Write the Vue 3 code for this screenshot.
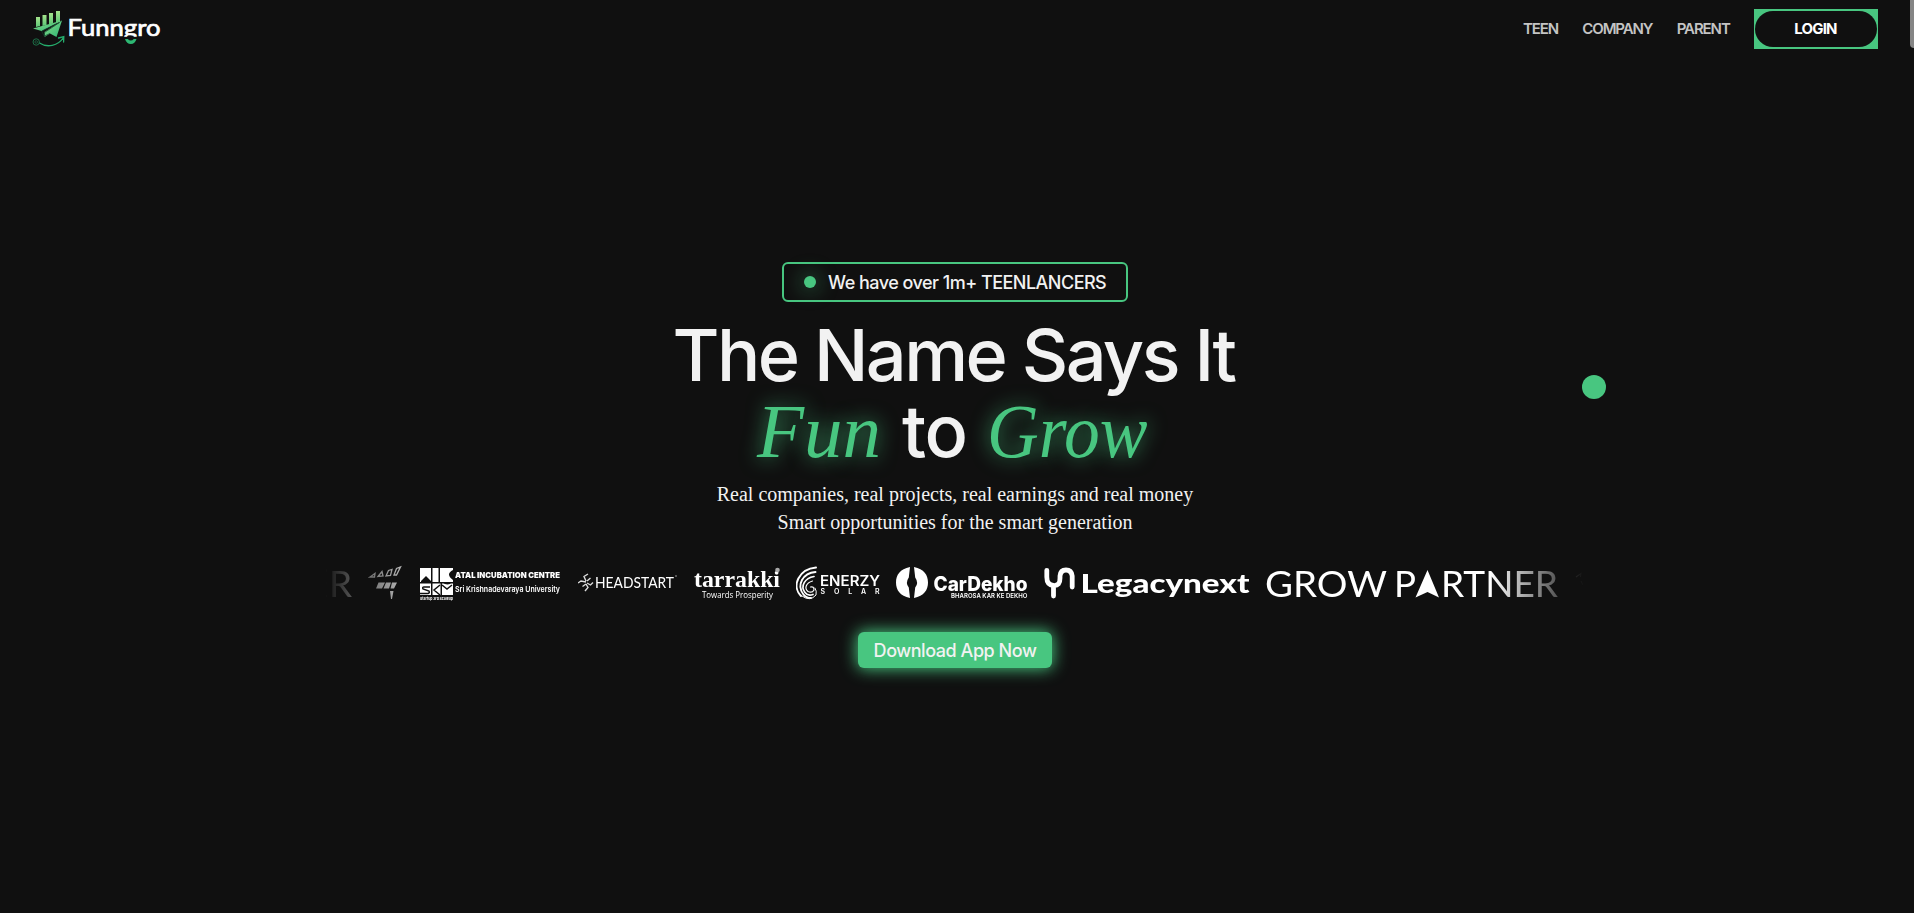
<script setup>
const links = ['TEEN', 'COMPANY', 'PARENT']
</script>

<template>
  <div class="page">
    <header class="bar">
      <svg class="brand" width="132" height="40" viewBox="0 0 132 40">
        <defs>
          <linearGradient id="leaf" x1="0" y1="0" x2="0" y2="1">
            <stop offset="0" stop-color="#a5e38c" />
            <stop offset="1" stop-color="#5cc776" />
          </linearGradient>
          <linearGradient id="plane" x1="0" y1="0" x2="1" y2="1">
            <stop offset="0" stop-color="#93dd8a" />
            <stop offset="1" stop-color="#27b573" />
          </linearGradient>
          <clipPath id="wordclip"><rect x="34" y="0" width="98" height="26.8" /></clipPath>
        </defs>
        <g fill="url(#leaf)">
          <path d="M4 7h4v9l-4 1z" />
          <path d="M10.500 5h4v10l-4 1z" />
          <path d="M17 3h4v10.500l-4 1z" />
          <path d="M24 1h4v11l-4 1z" />
        </g>
        <path d="M1 18.500L30 10.500L9.500 21z" fill="url(#plane)" />
        <path d="M30 10.500L24.500 27L18 23.500L12.500 27L12.500 22z" fill="url(#plane)" />
        <path d="M10 21L27.500 12.500L12.500 22.500V26.500L9.500 21M12.500 26L18 23.500" fill="none" stroke="#14432c" stroke-width=".7" />
        <path d="M7.500 33C15 38 26 36 31.500 27.500M26.500 28L31.800 26.500L31.600 32" fill="none" stroke="#25ad6c" stroke-width="1.300" stroke-linecap="round" />
        <circle cx="4.200" cy="32" r="3.200" fill="none" stroke="#1d6f47" stroke-width="1" />
        <circle cx="4.200" cy="32" r="1.300" fill="none" stroke="#1d6f47" stroke-width=".7" />
        <text class="word" x="35.500" y="26" textLength="93" lengthAdjust="spacingAndGlyphs" clip-path="url(#wordclip)">Funngro</text>
        <path d="M93 29h2.800q3 3 6 0h2.700q-1.500 5-5.700 5t-5.800-5z" fill="#2db873" />
      </svg>
      <nav class="nav">
        <a v-for="l in links" :key="l" class="link">{{ l }}</a>
        <div class="login-box"><button class="login">LOGIN</button></div>
      </nav>
    </header>

    <main class="hero">
      <div class="badge"><i class="pulse"></i><span>We have over 1m+ TEENLANCERS</span></div>
      <h1 class="title">
        <span class="row first">The Name Says It</span>
        <span class="row second"><em class="fun">Fun</em><span class="to">to</span><em class="grow">Grow</em></span>
      </h1>
      <p class="lead">Real companies, real projects, real earnings and real money<br />Smart opportunities for the smart generation</p>

      <div class="marquee">
        <svg width="27" height="36" viewBox="0 0 27 36">
          <text class="gp" x="4" y="32" textLength="23" lengthAdjust="spacingAndGlyphs">R</text>
          <path d="M0 5.500h2M0 18h1.500M0 31h2" stroke="#fff" stroke-width="2.500" />
        </svg>
        <svg width="34" height="36" viewBox="0 0 34 36">
          <g fill="none" stroke="#ddd" stroke-width="1.300">
            <path d="M2 12L7 8.500L6.500 12zM10 11.500L14 6.500L15 11zM18 11L20.500 5.500L24 4.500L22.500 10.500zM26 10L28.500 3.500L32.500 2L28.500 10z" />
          </g>
          <path d="M10.500 17.500h6.500l-3 6H8zM18 17.500h5l-2 6h-5.500zM24 17.500h5l-3 6h-3.500zM22 26h3.500l-1.500 8h-1z" fill="#ddd" />
        </svg>
        <svg width="144" height="36" viewBox="0 0 144 36">
          <path fill="#fff" d="M2 3h11v14H2zM14.500 3h6v14h-6zM22 3h13v14H22zM2 18.500h11V30H2zM14.500 18.500h8V30h-8zM24 18.500h11V30H24z" />
          <path d="M12 22H6q-2 0-1 2l6 2q1 2-1 2.500H2M22 20l-6 5 6 5M24 20l5 4 5-4" fill="none" stroke="#101010" stroke-width="1.500" />
          <path fill="#101010" d="M3 16l5-5 5 5v1H3zM35 5q-8 4 0 10zM24 17q6 5 10 0z" />
          <text class="tiny" x="2" y="34.500" textLength="33" lengthAdjust="spacingAndGlyphs">Startup 3rd Scaleup</text>
          <text class="aic" x="37" y="12.700" textLength="105" lengthAdjust="spacingAndGlyphs">ATAL INCUBATION CENTRE</text>
          <text class="uni" x="37" y="26.500" textLength="105" lengthAdjust="spacingAndGlyphs">Sri Krishnadevaraya University</text>
        </svg>
        <svg width="100" height="36" viewBox="0 0 100 36">
          <path d="M8 16L6 11.500L10 9M8 17L3 16L0 18M8 19L10 22.500L7 26M9 18L12.500 20L15 17.500M8 19L4.500 21.500M9 16L12.500 13" fill="none" stroke="#ddd" stroke-width="1.400" />
          <text class="head" x="17" y="22.500" textLength="79" lengthAdjust="spacingAndGlyphs">HEADSTART</text>
          <circle cx="98" cy="11" r=".8" fill="#aaa" />
        </svg>
        <svg width="86" height="36" viewBox="0 0 86 36">
          <text class="tar" x="0" y="22" textLength="86" lengthAdjust="spacingAndGlyphs">tarrakki</text>
          <circle cx="83.500" cy="5" r="2.300" fill="#aaa" />
          <text class="prosp" x="8" y="33" textLength="71" lengthAdjust="spacingAndGlyphs">Towards Prosperity</text>
        </svg>
        <svg width="84" height="36" viewBox="0 0 84 36">
          <g fill="none" stroke="#fff" stroke-linecap="round">
            <path d="M20 2.500C3 4 -5 21 5 31" stroke-width="2" />
            <path d="M19.500 7C7 8 0 20 7.500 29.500Q10 33 15 33" stroke-width="1.900" />
            <path d="M18 11.500C9 13 4 21 9 27.500Q12 31.500 17 29.500" stroke-width="1.700" />
            <path d="M16.500 16C10 18 8 23 12 26.500Q16 28.500 18 25Q18 21 14.500 22" stroke-width="1.200" />
            <path d="M6 31Q14 37 20 30Q21 26 19 23" stroke-width="1" />
          </g>
          <text class="ener" x="24" y="20.500" textLength="60" lengthAdjust="spacingAndGlyphs">ENERZY</text>
          <text class="sol" x="24.500" y="28.700" textLength="59">SOLAR</text>
        </svg>
        <svg width="132" height="36" viewBox="0 0 132 36">
          <path d="M14 2C4 4 0 10 0 17.500S4 31 14 33L12.800 22.500Q9 18 12.800 12.500zM18 2C28 4 32 10 32 17.500S28 31 18 33L19.200 22.500Q23 18 19.200 12.500z" fill="#fff" />
          <text class="car" x="37.500" y="25.800" textLength="94" lengthAdjust="spacingAndGlyphs">CarDekho</text>
          <text class="bha" x="55" y="32.800" textLength="76.500" lengthAdjust="spacingAndGlyphs">BHAROSA KAR KE DEKHO</text>
        </svg>
        <svg width="206" height="36" viewBox="0 0 206 36">
          <path d="M2.800 5.300V12Q2.800 20 9.500 20.500T16 13V11Q16.500 5 22 5T28.200 11V22M9.500 21V31" fill="none" stroke="#fff" stroke-width="4.800" stroke-linecap="round" stroke-linejoin="round" />
          <text class="leg" x="36.500" y="27.500" textLength="169" lengthAdjust="spacingAndGlyphs">Legacynext</text>
        </svg>
        <svg width="292" height="36" viewBox="0 0 292 36">
          <text class="gp" x="-1" y="32" textLength="122" lengthAdjust="spacingAndGlyphs">GROW</text>
          <text class="gp" x="128" y="32" textLength="22" lengthAdjust="spacingAndGlyphs">P</text>
          <path d="M161.500 5L173 32.500L161.500 27L149.500 32.500z" fill="#fff" />
          <text class="gp" x="175" y="32" textLength="117" lengthAdjust="spacingAndGlyphs">RTNER</text>
        </svg>
        <svg width="34" height="36" viewBox="0 0 34 36">
          <path d="M2 12L7 8.500L6.500 12M7 16L9 20" fill="none" stroke="#ddd" stroke-width="1.200" />
        </svg>
      </div>

      <button class="cta">Download App Now</button>
    </main>

    <i class="cursor"></i>
    <i class="thumb"></i>
  </div>
</template>

<style>
body { background: #101010; overflow: hidden; }
</style>

<style scoped>
.page { height: 913px; background: #101010; color: #f2f2f2; position: relative; overflow: hidden; font-family: Inter, "Liberation Sans", sans-serif; }
.bar { height: 58px; display: flex; align-items: center; justify-content: space-between; padding: 0 36px 0 32px; }
.brand { display: block; margin-top: 1px; }
.word { font: 400 22.500px Lato, sans-serif; fill: #fff; stroke: #fff; stroke-width: .7px; }
.nav { display: flex; align-items: center; font-weight: 600; font-size: 15px; }
.link { color: #c4c4c4; letter-spacing: -1.100px; margin-right: 24.300px; white-space: nowrap; line-height: 20px; padding-bottom: 1px; }
.login-box { width: 124px; height: 40px; background: #48c680; display: flex; align-items: center; justify-content: center; }
.login { width: 122px; height: 36px; border: 0; border-radius: 18px; background: #101010; color: #fff; font: 700 15px Inter, sans-serif; letter-spacing: -.8px; padding: 0 1px 1px 0; }

.hero { display: flex; flex-direction: column; align-items: center; padding: 204px 4px 0 0; }
.badge { box-sizing: border-box; width: 346px; height: 40px; border: 2px solid #48c680; border-radius: 6px; display: flex; align-items: center; gap: 12px; padding-left: 20px; font-weight: 500; font-size: 18px; letter-spacing: -.520px; white-space: nowrap; }
.pulse { width: 12px; height: 12px; border-radius: 50%; background: #48c680; box-shadow: 0 0 20px 3px rgba(72, 198, 128, .4); flex: none; }
.title { margin: 16px 0 0; font-weight: 500; font-size: 72px; line-height: 74px; letter-spacing: -2.600px; }
.row { display: flex; justify-content: center; white-space: nowrap; }
.first { margin-bottom: 2px; padding-right: 3px; }
.second { align-items: baseline; padding-right: 6px; }
.second em { font: italic 400 77px/74px "Liberation Serif", serif; letter-spacing: 0; color: #48c680; text-shadow: 0 0 20px rgba(72, 198, 128, .75); }
.second .grow { transform: scaleX(.93); transform-origin: 0 50%; margin-right: -13px; }
.to { margin: 0 21px; letter-spacing: -1.500px; }
.lead { margin: 12px 0 0; font: 20px/28px "Liberation Serif", serif; text-align: center; color: #f2f2f2; }

.marquee { width: 1260px; height: 36px; margin-top: 29px; display: flex; gap: 16px; overflow: hidden; -webkit-mask-image: linear-gradient(90deg, transparent, #000 7.500%, #000 92.500%, transparent); mask-image: linear-gradient(90deg, transparent, #000 7.500%, #000 92.500%, transparent); }
.marquee svg { flex: none; display: block; }
.marquee text { fill: #fff; }
.marquee .gp { font: 400 37px Lato, sans-serif; }
.tiny { font: 700 4px Inter, sans-serif; }
.aic { font: 900 8px Inter, sans-serif; }
.uni { font: 600 8px Inter, sans-serif; }
.head { font: 400 14.500px Lato, sans-serif; }
.tar { font: 700 24px "Liberation Serif", serif; }
.prosp { font: 400 8.500px "Open Sans", sans-serif; }
.ener { font: 600 14.500px Inter, sans-serif; }
.sol { font: 600 7px Inter, sans-serif; }
.car { font: 800 20px Inter, sans-serif; }
.bha { font: 600 6.500px Inter, sans-serif; }
.leg { font: 900 26px Lato, sans-serif; }

.cta { margin-top: 31px; width: 194px; height: 36px; padding: 0; border: 0; border-radius: 6px; background: #48c680; color: #f2f2f2; font: 500 18px Inter, sans-serif; letter-spacing: -.450px; box-shadow: 0 0 16px 1px #48c680; white-space: nowrap; }
.cursor { position: absolute; left: 1582px; top: 375px; width: 24px; height: 24px; border-radius: 50%; background: #48c680; }
.thumb { position: absolute; right: 0; top: 0; width: 4px; height: 48px; background: #858585; border-radius: 0 0 0 4px; }
</style>
